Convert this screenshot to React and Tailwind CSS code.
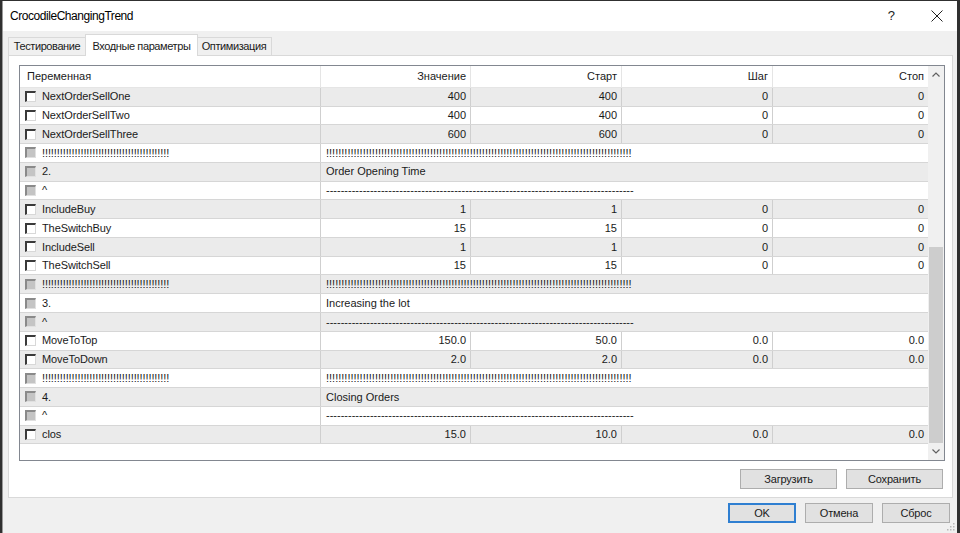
import React from 'react';

const EXCL_SHORT = '!'.repeat(43);
const EXCL_LONG = '!'.repeat(100);
const DASHES = '-'.repeat(84);

const rows = [
    { name: 'NextOrderSellOne', vals: ['400', '400', '0', '0'] },
    { name: 'NextOrderSellTwo', vals: ['400', '400', '0', '0'] },
    { name: 'NextOrderSellThree', vals: ['600', '600', '0', '0'] },
    { name: EXCL_SHORT, text: EXCL_LONG },
    { name: '2.', text: 'Order Opening Time' },
    { name: '^', text: DASHES },
    { name: 'IncludeBuy', vals: ['1', '1', '0', '0'] },
    { name: 'TheSwitchBuy', vals: ['15', '15', '0', '0'] },
    { name: 'IncludeSell', vals: ['1', '1', '0', '0'] },
    { name: 'TheSwitchSell', vals: ['15', '15', '0', '0'] },
    { name: EXCL_SHORT, text: EXCL_LONG },
    { name: '3.', text: 'Increasing the lot' },
    { name: '^', text: DASHES },
    { name: 'MoveToTop', vals: ['150.0', '50.0', '0.0', '0.0'] },
    { name: 'MoveToDown', vals: ['2.0', '2.0', '0.0', '0.0'] },
    { name: EXCL_SHORT, text: EXCL_LONG },
    { name: '4.', text: 'Closing Orders' },
    { name: '^', text: DASHES },
    { name: 'clos', vals: ['15.0', '10.0', '0.0', '0.0'] },
];

const Checkbox = ({ disabled }) => (
    <span
        className={
            disabled
                ? 'w-[11px] h-[11px] shrink-0 bg-[#c4c4c4] border-t-2 border-l-2 border-t-[#8a8a8a] border-l-[#8a8a8a] border-b border-r border-b-[#e0e0e0] border-r-[#e0e0e0]'
                : 'w-[11px] h-[11px] shrink-0 bg-white border-t-2 border-l-2 border-t-[#3a3a3a] border-l-[#3a3a3a] border-b border-r border-b-[#d8d8d8] border-r-[#d8d8d8]'
        }
    />
);

const Button = ({ children, primary, w = 'w-[67px]' }) => (
    <div
        className={`${w} h-[20px] flex items-center justify-center bg-[#e1e1e1] text-[11px] text-[#1a1a1a] tracking-[-0.2px] border ${
            primary ? 'border-[#2f7fd1] shadow-[inset_0_0_0_1px_#2f7fd1]' : 'border-[#adadad]'
        }`}
    >
        {children}
    </div>
);

const Row = ({ row, idx }) => {
    const bg = idx % 2 === 0 ? 'bg-[#ebebeb]' : 'bg-white';
    const isSection = !row.vals;
    return (
        <div className={`flex h-[18.78px] border-b border-[#d6d6d6] ${bg}`}>
            <div className="w-[301px] shrink-0 flex items-center gap-[6px] pl-[5px] border-r border-[#cfcfcf] overflow-hidden whitespace-nowrap">
                <Checkbox disabled={isSection} />
                <span className="tracking-[-0.1px]">{row.name}</span>
            </div>
            {isSection ? (
                <div className="flex-1 flex items-center pl-[5px] overflow-hidden whitespace-nowrap">{row.text}</div>
            ) : (
                <>
                    <div className="w-[150px] shrink-0 flex items-center justify-end pr-[4px] border-r border-[#cfcfcf]">{row.vals[0]}</div>
                    <div className="w-[151px] shrink-0 flex items-center justify-end pr-[4px] border-r border-[#cfcfcf]">{row.vals[1]}</div>
                    <div className="w-[151px] shrink-0 flex items-center justify-end pr-[4px] border-r border-[#cfcfcf]">{row.vals[2]}</div>
                    <div className="flex-1 flex items-center justify-end pr-[4px]">{row.vals[3]}</div>
                </>
            )}
        </div>
    );
};

const App = () => {
    return (
        <div className="w-[960px] h-[533px] bg-[#303030] pt-px pl-[2px] pr-[3px] overflow-hidden font-['Liberation_Sans',Arial,sans-serif] text-[11px] text-[#1a1a1a]">
            <div className="h-full bg-[#f0f0f0] flex flex-col border-l border-[#9a9a9a]">
                {/* title bar */}
                <div className="h-[30px] shrink-0 bg-white flex items-center pl-[7px] pr-[14px]">
                    <span className="text-[12px] text-black tracking-[-0.45px]">CrocodileChangingTrend</span>
                    <span className="ml-auto text-[13px] text-[#222] mr-[36px]">?</span>
                    <svg width="12" height="12" viewBox="0 0 12 12" className="mb-[1px]">
                        <path d="M0.5 0.5 L11.5 11.5 M11.5 0.5 L0.5 11.5" stroke="#222" strokeWidth="1" />
                    </svg>
                </div>

                {/* tabs */}
                <div className="flex items-end h-[24px] pl-[5px] relative z-10 tracking-[-0.4px]">
                    <div className="w-[78px] h-[18px] flex items-center justify-center bg-[#f0f0f0] border border-b-0 border-[#d9d9d9]">Тестирование</div>
                    <div className="w-[113px] h-[22px] -mx-[1px] flex items-start justify-center pt-[3px] bg-white border border-b-0 border-[#d9d9d9] relative top-px">Входные параметры</div>
                    <div className="w-[75px] h-[18px] flex items-center justify-center bg-[#f0f0f0] border border-b-0 border-l-0 border-[#d9d9d9]">Оптимизация</div>
                </div>

                {/* tab panel */}
                <div className="ml-[5px] mr-[4px] h-[447px] bg-white border border-[#d9d9d9] flex flex-col pt-[9px] pl-[10px] pr-[7px]">
                    <div className="h-[396px] border border-[#828790] flex">
                        <div className="flex-1 flex flex-col">
                            {/* header */}
                            <div className="flex h-[22px] border-b border-[#e5e5e5] bg-white">
                                <div className="w-[301px] shrink-0 flex items-center pl-[7px] border-r border-[#e5e5e5]">Переменная</div>
                                <div className="w-[150px] shrink-0 flex items-center justify-end pr-[4px] border-r border-[#e5e5e5]">Значение</div>
                                <div className="w-[151px] shrink-0 flex items-center justify-end pr-[4px] border-r border-[#e5e5e5]">Старт</div>
                                <div className="w-[151px] shrink-0 flex items-center justify-end pr-[4px] border-r border-[#e5e5e5]">Шаг</div>
                                <div className="flex-1 flex items-center justify-end pr-[4px]">Стоп</div>
                            </div>
                            {rows.map((row, i) => (
                                <Row key={i} row={row} idx={i} />
                            ))}
                        </div>
                        {/* scrollbar */}
                        <div className="w-[16px] shrink-0 bg-[#f0f0f0] flex flex-col items-center">
                            <div className="h-[17px] flex items-center justify-center">
                                <svg width="8" height="5" viewBox="0 0 8 5">
                                    <path d="M0.5 4.5 L4 1 L7.5 4.5" stroke="#606060" fill="none" strokeWidth="1.2" />
                                </svg>
                            </div>
                            <div className="flex-1 w-full flex flex-col justify-end px-px">
                                <div className="h-[196px] bg-[#cdcdcd]" />
                            </div>
                            <div className="h-[17px] flex items-center justify-center">
                                <svg width="8" height="5" viewBox="0 0 8 5">
                                    <path d="M0.5 0.5 L4 4 L7.5 0.5" stroke="#606060" fill="none" strokeWidth="1.2" />
                                </svg>
                            </div>
                        </div>
                    </div>
                    <div className="flex justify-end gap-[9px] mt-[8px] pr-[2px]">
                        <Button w="w-[97px]">Загрузить</Button>
                        <Button w="w-[97px]">Сохранить</Button>
                    </div>
                </div>

                {/* dialog buttons */}
                <div className="flex justify-end gap-[9px] mt-[5px] pr-[7px]">
                    <Button primary w="w-[68px]">OK</Button>
                    <Button w="w-[68px]">Отмена</Button>
                    <Button w="w-[68px]">Сброс</Button>
                </div>
                <div className="flex justify-end pr-[2px] mt-auto mb-[2px]">
                    <svg width="8" height="8" viewBox="0 0 8 8">
                        <rect x="6" y="0" width="1.5" height="1.5" fill="#b8b8b8" />
                        <rect x="3" y="3" width="1.5" height="1.5" fill="#b8b8b8" />
                        <rect x="6" y="3" width="1.5" height="1.5" fill="#b8b8b8" />
                        <rect x="0" y="6" width="1.5" height="1.5" fill="#b8b8b8" />
                        <rect x="3" y="6" width="1.5" height="1.5" fill="#b8b8b8" />
                        <rect x="6" y="6" width="1.5" height="1.5" fill="#b8b8b8" />
                    </svg>
                </div>
            </div>
        </div>
    );
};

export default App;
